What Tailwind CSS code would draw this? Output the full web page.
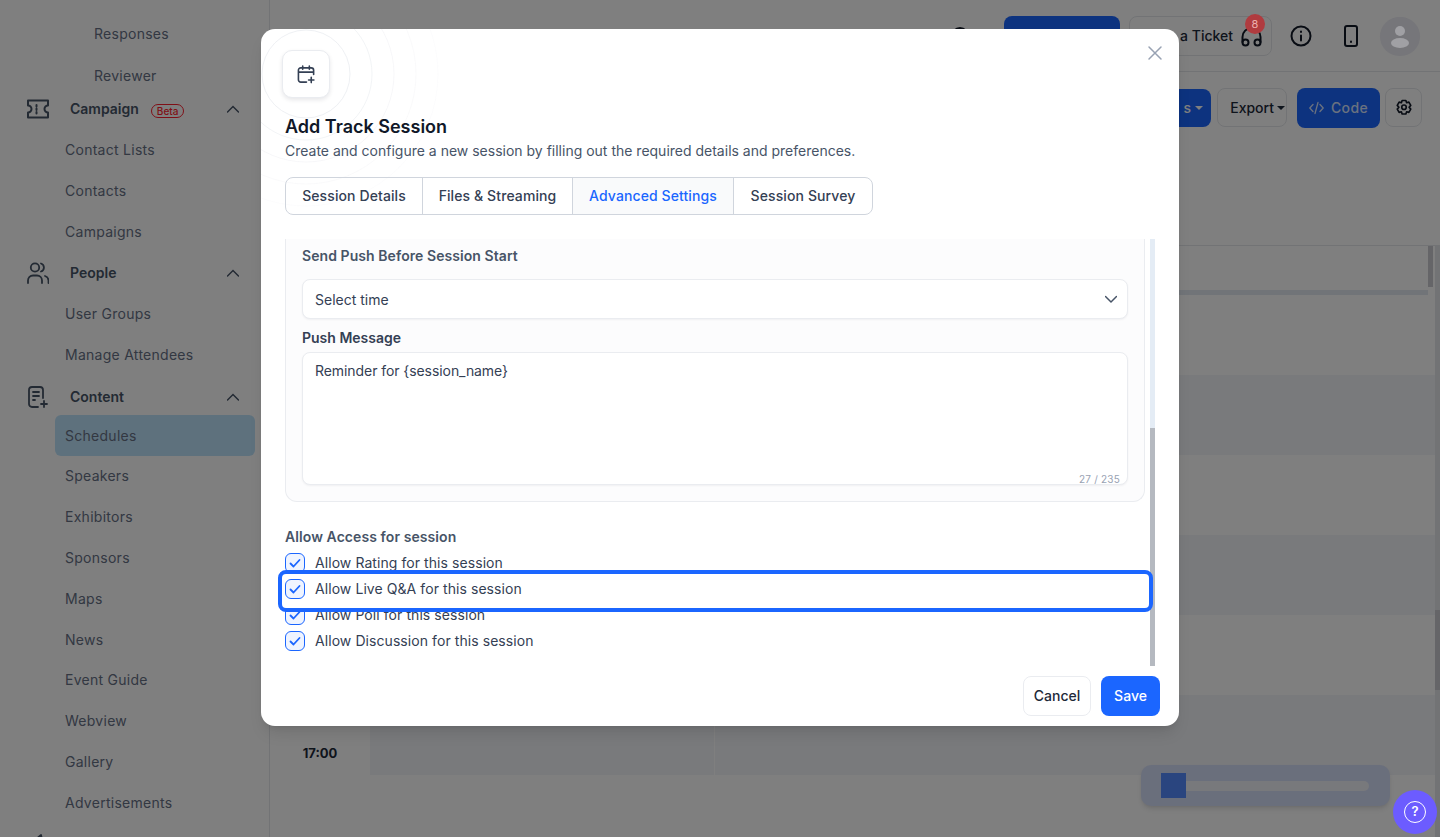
<!DOCTYPE html>
<html lang="en">
<head>
<meta charset="utf-8">
<title>Add Track Session</title>
<script src="https://cdn.jsdelivr.net/npm/@tailwindcss/browser@4"></script>
</head>
<body class="m-0 overflow-hidden bg-white font-['Inter',sans-serif]">
<div class="relative h-[837px] w-[1440px] overflow-hidden bg-white">
  <div class="flex h-full">
    <!-- Sidebar -->
    <aside class="flex h-full w-[270px] shrink-0 flex-col overflow-hidden border-r border-[#e5e7eb] pt-[13px] pr-[14px] text-sm tracking-[0.27px] text-[#667085]">
      <div class="flex h-[42px] shrink-0 items-center pl-[94px]">Responses</div>
      <div class="flex h-[41px] shrink-0 items-center pl-[94px]">Reviewer</div>
      <div class="mb-[7px] flex h-[26px] shrink-0 items-center pl-[27px] font-semibold tracking-normal text-[#475467]">
        <svg class="mr-[21px] h-[22px] w-[22px]" viewBox="0 0 22 22" fill="none" stroke="#475467" stroke-width="2" stroke-linejoin="round"><path d="M1 2.500h20v5a3.500 3.500 0 0 0 0 7v5H1v-5a3.500 3.500 0 0 0 0-7z"/><path d="M9.500 7v1.500M9.500 10.500v1.500M9.500 14v1.500" stroke-linecap="round"/></svg>
        <span>Campaign</span>
        <span class="ml-3 translate-y-[2px] rounded-full border border-[#ff1f2f] px-[5px] text-[10px] leading-[12px] font-medium text-[#ff1f2f]">Beta</span>
        <svg class="mr-4 ml-auto h-3 w-3" viewBox="0 0 12 12" fill="none" stroke="#475467" stroke-width="1.500" stroke-linecap="round"><path d="M0.500 9L6 3.500 11.500 9"/></svg>
      </div>
      <div class="flex h-[41px] shrink-0 items-center pl-[65px]">Contact Lists</div>
      <div class="flex h-[41px] shrink-0 items-center pl-[65px]">Contacts</div>
      <div class="flex h-[41px] shrink-0 items-center pl-[65px]">Campaigns</div>
      <div class="flex h-[42px] shrink-0 items-center pl-[27px] font-semibold tracking-normal text-[#475467]">
        <svg class="mr-[21px] h-[22px] w-[22px]" viewBox="0 0 22 22" fill="none" stroke="#475467" stroke-width="1.800" stroke-linecap="round"><circle cx="8" cy="5.500" r="4.200"/><path d="M14 1.500a4.200 4.200 0 0 1 0 8M1 21v-2.500a5 5 0 0 1 5-5h4a5 5 0 0 1 5 5V21M18 14a5 5 0 0 1 3.500 4.500V21"/></svg>
        <span>People</span>
        <svg class="mr-4 ml-auto h-3 w-3" viewBox="0 0 12 12" fill="none" stroke="#475467" stroke-width="1.500" stroke-linecap="round"><path d="M0.500 9L6 3.500 11.500 9"/></svg>
      </div>
      <div class="flex h-[40px] shrink-0 items-center pl-[65px]">User Groups</div>
      <div class="flex h-[42px] shrink-0 items-center pl-[65px]">Manage Attendees</div>
      <div class="flex h-[40px] shrink-0 items-center pt-[2px] pl-[27px] font-semibold tracking-normal text-[#475467]">
        <svg class="mr-[21px] h-[22px] w-[22px]" viewBox="0 0 22 22" fill="none" stroke="#475467" stroke-width="1.800" stroke-linecap="round" stroke-linejoin="round"><path d="M11 21H5a3 3 0 0 1-3-3V4a3 3 0 0 1 3-3h8a3 3 0 0 1 3 3v8"/><path d="M6 6h6M6 10h6M6 14h2M17 15v6M14 18h6"/></svg>
        <span>Content</span>
        <svg class="mr-4 ml-auto h-3 w-3" viewBox="0 0 12 12" fill="none" stroke="#475467" stroke-width="1.500" stroke-linecap="round"><path d="M0.500 9L6 3.500 11.500 9"/></svg>
      </div>
      <div class="-mt-px ml-[55px] flex h-[41px] shrink-0 items-center rounded-md bg-[#bde3fb] pl-[10px]">Schedules</div>
      <div class="flex h-[40px] shrink-0 items-center pl-[65px]">Speakers</div>
      <div class="flex h-[41px] shrink-0 items-center pl-[65px]">Exhibitors</div>
      <div class="flex h-[41px] shrink-0 items-center pl-[65px]">Sponsors</div>
      <div class="flex h-[41px] shrink-0 items-center pl-[65px]">Maps</div>
      <div class="flex h-[41px] shrink-0 items-center pl-[65px]">News</div>
      <div class="flex h-[40px] shrink-0 items-center pl-[65px]">Event Guide</div>
      <div class="flex h-[41px] shrink-0 items-center pl-[65px]">Webview</div>
      <div class="flex h-[41px] shrink-0 items-center pl-[65px]">Gallery</div>
      <div class="flex h-[41px] shrink-0 items-center pl-[65px]">Advertisements</div>
      <div class="flex h-[41px] shrink-0 items-center pl-[27px] font-semibold tracking-normal text-[#475467]">
        <svg class="mr-[21px] h-[22px] w-[22px]" viewBox="0 0 22 22" fill="none" stroke="#475467" stroke-width="1.800" stroke-linecap="round" stroke-linejoin="round"><path d="M14 2L3 11v4l15 3z"/></svg>
        <span>Engagement</span>
      </div>
    </aside>

    <!-- Main -->
    <main class="relative flex min-w-0 flex-1 flex-col">
      <header class="flex h-[72px] shrink-0 items-center justify-end border-b border-[#e5e7eb] pr-5">
        <svg class="mr-[34px] h-5 w-5" viewBox="0 0 20 20" fill="none" stroke="#111827" stroke-width="2"><circle cx="10" cy="10" r="8"/></svg>
        <div class="mr-[9px] h-10 w-[116px] rounded-lg bg-[#1b66ff]"></div>
        <div class="mr-[18px] flex h-10 w-[143px] items-center justify-end gap-2 rounded-lg border border-[#e5e7eb] pr-[9px] text-sm font-medium text-[#1d2939]">
          <span>Create a Ticket</span>
          <svg class="mt-[2px] h-[20px] w-[21px]" viewBox="0 0 21 20" fill="none" stroke="#111827" stroke-width="2" stroke-linecap="round"><path d="M1.500 15V10a9 9 0 0 1 18 0v5"/><circle cx="4.500" cy="15.500" r="3"/><circle cx="16.500" cy="15.500" r="3"/></svg>
        </div>
        <svg class="mr-[32px] h-[22px] w-[22px]" viewBox="0 0 22 22" fill="none" stroke="#111827" stroke-width="2" stroke-linecap="round"><circle cx="11" cy="11" r="9.500"/><path d="M11 10.500v5M11 6.500v.5"/></svg>
        <svg class="mr-[22px] h-[22px] w-[14px]" viewBox="0 0 14 22" fill="none" stroke="#111827" stroke-width="2" stroke-linecap="round"><rect x="1" y="1" width="12" height="20" rx="2"/><path d="M7 16.500v.5"/></svg>
        <div class="h-10 w-10"></div>
      </header>
      <div class="flex h-[173px] shrink-0 items-start justify-end pt-4 pr-[18px] text-sm font-medium">
        <div class="mt-px mr-[6px] flex h-[38px] w-[120px] items-center justify-end gap-1 rounded-lg bg-[#1b66ff] pr-[8px] text-white">s<span class="h-0 w-0 border-x-[4px] border-t-[4px] border-x-transparent border-t-white"></span></div>
        <div class="mr-[10px] flex h-[39px] w-[70px] items-center justify-end gap-[3px] rounded-lg border border-[#e5e7eb] pr-px text-[#1d2939]">Export<span class="h-0 w-0 border-x-[4px] border-t-[4px] border-x-transparent border-t-[#1d2939]"></span></div>
        <div class="mr-[5px] flex h-10 w-[83px] items-center justify-center gap-[7px] rounded-lg bg-[#1b66ff] text-sm tracking-wide text-[#d5e3ff]">
          <svg class="h-4 w-[15px]" viewBox="0 0 15 16" fill="none" stroke="currentColor" stroke-width="1.300" stroke-linecap="round" stroke-linejoin="round"><path d="M4 4.500L.8 8 4 11.500M11 4.500L14.200 8 11 11.500M9 2.500L6 13.500"/></svg>
          Code
        </div>
        <div class="flex h-[39px] w-[37px] items-center justify-center rounded-lg border border-[#e5e7eb]">
          <svg class="h-[18px] w-[18px]" viewBox="0 0 24 24" fill="none" stroke="#111827" stroke-width="2.200" stroke-linejoin="round"><path d="M9.500 2h5l1 3 3-.8 2.500 4.300-2.200 2.500 2.200 2.500-2.500 4.300-3-.8-1 3h-5l-1-3-3 .8L3 13.500l2.200-2.500L3 8.500l2.500-4.300 3 .8z"/><circle cx="12" cy="11" r="3"/></svg>
        </div>
      </div>
      <!-- Calendar -->
      <div class="flex flex-1 flex-col pr-[5px]">
        <div class="flex h-[50px] shrink-0 items-stretch border-t border-[#e5e7eb] pl-[100px]">
          <div class="flex flex-1 flex-col justify-end"><div class="h-[5px] bg-[#e2e8f0]"></div></div>
          <div class="w-[7px] pr-[2px]"><div class="h-[41px] bg-[#cbcbd0]"></div></div>
        </div>
        <div class="ml-[100px] h-[80px] shrink-0"></div>
        <div class="ml-[100px] h-[80px] shrink-0 bg-[#f2f4f9]"></div>
        <div class="ml-[100px] h-[80px] shrink-0"></div>
        <div class="ml-[100px] h-[80px] shrink-0 bg-[#f2f4f9]"></div>
        <div class="ml-[100px] h-[80px] shrink-0"></div>
        <div class="flex h-[80px] shrink-0">
          <div class="flex w-[100px] items-end justify-center pb-[12px] text-[13px] font-bold text-[#1d2939]">17:00</div>
          <div class="w-[345px] border-r border-[#fff] bg-[#f2f4f9]"></div>
          <div class="flex-1 bg-[#f2f4f9]"></div>
        </div>
      </div>
      <div class="absolute top-[245px] right-0 bottom-0 w-[5px] bg-[#e5e7eb]">
        <div class="mt-[365px] h-[80px] bg-[#cbcbd0]"></div>
      </div>
      <!-- Mini map -->
      <div class="absolute top-[765px] right-[50px] flex h-[41px] w-[249px] items-center rounded-[10px] bg-[#d5def8] pl-[20px] shadow-md">
        <div class="h-[25px] w-[25px] bg-[#548aff]"></div>
        <div class="h-[10px] w-[183px] rounded-r-full bg-[#f0f2f8]"></div>
      </div>
    </main>
  </div>

  <!-- Overlay -->
  <div class="absolute inset-0 bg-black/50"></div>

  <!-- Ticket badge -->
  <span class="absolute top-[14px] left-[1245px] flex h-5 w-5 items-center justify-center rounded-full bg-[#b03b3f] text-[11px] text-[#eeb0b0]">8</span>

  <!-- Avatar -->
  <div class="absolute top-[17px] left-[1380px] flex h-[39px] w-10 items-center justify-center rounded-full bg-[#76767a]">
    <svg class="h-7 w-7" viewBox="0 0 28 28" fill="#a0a0a4"><circle cx="14" cy="8" r="5"/><ellipse cx="14" cy="20" rx="9" ry="5"/></svg>
  </div>

  <!-- Help button -->
  <div class="absolute top-[790px] left-[1393px] flex h-11 w-11 items-center justify-center rounded-full bg-[#6c5cff]">
    <div class="flex h-[22px] w-[22px] items-center justify-center rounded-full border border-white text-[13px] font-semibold text-white">?</div>
  </div>

  <!-- Modal -->
  <section class="absolute top-[29px] left-[261px] flex h-[697px] w-[918px] flex-col overflow-hidden rounded-[14px] bg-white pl-6 shadow-lg">
    <svg class="pointer-events-none absolute -top-[29px] -left-[29px] h-[340px] w-[340px]" viewBox="0 0 340 340" fill="none" stroke="#eaecf0">
      <circle cx="74" cy="74" r="44" stroke-opacity="0.800"/>
      <circle cx="74" cy="74" r="66" stroke-opacity="0.600"/>
      <circle cx="74" cy="74" r="88" stroke-opacity="0.400"/>
      <circle cx="74" cy="74" r="110" stroke-opacity="0.250"/>
      <circle cx="74" cy="74" r="132" stroke-opacity="0.150"/>
    </svg>
    <button class="absolute top-[16px] right-[16px] h-4 w-4">
      <svg class="h-4 w-4" viewBox="0 0 16 16" fill="none" stroke="#98a2b3" stroke-width="1.500" stroke-linecap="round"><path d="M2 2l12 12M14 2L2 14"/></svg>
    </button>
    <div class="relative mt-[21px] -ml-[3px] flex h-12 w-12 items-center justify-center rounded-[10px] border border-[#eaecf0] bg-white shadow-[0_2px_4px_rgba(16,24,40,0.1)]">
      <svg class="h-[19px] w-[19px]" viewBox="0 0 20 20" fill="none" stroke="#344054" stroke-width="1.700" stroke-linecap="round" stroke-linejoin="round"><path d="M10 18H4a2.500 2.500 0 0 1-2.500-2.500V5.500A2.500 2.500 0 0 1 4 3h11a2.500 2.500 0 0 1 2.500 2.500V10M1.500 7.500h16M6 1v3.500M13 1v3.500M15 13v5.500M12.200 15.800h5.600"/></svg>
    </div>
    <h2 class="relative mt-[17px] text-lg leading-[24px] font-semibold text-[#101828]">Add Track Session</h2>
    <p class="relative text-sm leading-[24px] text-[#475467]">Create and configure a new session by filling out the required details and preferences.</p>
    <div class="relative mt-[14px] flex h-[38px] w-[588px] items-stretch overflow-hidden rounded-lg border border-[#d0d5dd] text-sm font-medium tracking-[0.1px] text-[#344054]">
      <div class="flex w-[137px] items-center justify-center border-r border-[#d0d5dd]">Session Details</div>
      <div class="flex w-[150px] items-center justify-center border-r border-[#d0d5dd]">Files &amp; Streaming</div>
      <div class="flex w-[161px] items-center justify-center border-r border-[#d0d5dd] bg-[#f9fafb] text-[#1b66ff]">Advanced Settings</div>
      <div class="flex flex-1 items-center justify-center">Session Survey</div>
    </div>
    <!-- Scroll area -->
    <div class="mt-6 flex h-[427px] w-[870px] gap-[5px]">
      <div class="w-[860px] shrink-0">
        <div class="h-[263px] rounded-b-xl border-x border-b border-[#eaecf0] bg-[#fcfcfd] px-4">
          <div class="flex h-[40px] items-start pt-[8px] text-sm leading-[18px] font-semibold tracking-[0.07px] text-[#475467]">Send Push Before Session Start</div>
          <div class="flex h-10 items-center justify-between rounded-lg border border-[#eaecf0] bg-white pr-[10px] pl-3 text-sm text-[#344054] shadow-[0_1px_2px_rgba(16,24,40,0.05)]">
            <span class="pt-px">Select time</span>
            <svg class="h-3 w-3" viewBox="0 0 12 12" fill="none" stroke="#475467" stroke-width="1.500" stroke-linecap="round" stroke-linejoin="round"><path d="M.5 3.500L6 9l5.500-5.500"/></svg>
          </div>
          <div class="mt-[10px] text-sm leading-[18px] font-semibold text-[#344054]">Push Message</div>
          <div class="relative mt-[5px] h-[133px] rounded-lg border border-[#eaecf0] bg-white px-3 pt-[8px] text-sm leading-[20px] tracking-[-0.07px] text-[#344054] shadow-[0_1px_2px_rgba(16,24,40,0.05)]">
            Reminder for {session_name}
            <span class="absolute right-[7px] -bottom-[1px] text-[10px] leading-[12px] tracking-[0.2px] text-[#98a2b3]">27 / 235</span>
          </div>
        </div>
        <div class="mt-[26px] text-sm leading-[18px] font-semibold tracking-[0.08px] text-[#475467]">Allow Access for session</div>
        <div class="mt-1 tracking-[0.07px]">
          <div class="flex h-[26px] items-center gap-[10px] text-sm text-[#344054]">
            <span class="flex h-5 w-5 items-center justify-center rounded-md border border-[#1b66ff] bg-[#eff4ff]"><svg class="h-3 w-3" viewBox="0 0 12 12" fill="none" stroke="#1b66ff" stroke-width="1.800" stroke-linecap="round" stroke-linejoin="round"><path d="M1.500 6.500L4.500 9.500 10.500 3"/></svg></span>
            <span>Allow Rating for this session</span>
          </div>
          <div class="relative flex h-[26px] items-center gap-[10px] text-sm text-[#344054]">
            <div class="absolute -top-[6px] -right-[8px] -bottom-[10px] -left-[7px] z-10 rounded-lg border-4 border-[#1b66ff] bg-white"></div>
            <span class="relative z-20 flex h-5 w-5 items-center justify-center rounded-md border border-[#1b66ff] bg-[#eff4ff]"><svg class="h-3 w-3" viewBox="0 0 12 12" fill="none" stroke="#1b66ff" stroke-width="1.800" stroke-linecap="round" stroke-linejoin="round"><path d="M1.500 6.500L4.500 9.500 10.500 3"/></svg></span>
            <span class="relative z-20">Allow Live Q&amp;A for this session</span>
          </div>
          <div class="flex h-[26px] items-center gap-[10px] text-sm text-[#344054]">
            <span class="flex h-5 w-5 items-center justify-center rounded-md border border-[#1b66ff] bg-[#eff4ff]"><svg class="h-3 w-3" viewBox="0 0 12 12" fill="none" stroke="#1b66ff" stroke-width="1.800" stroke-linecap="round" stroke-linejoin="round"><path d="M1.500 6.500L4.500 9.500 10.500 3"/></svg></span>
            <span>Allow Poll for this session</span>
          </div>
          <div class="flex h-[26px] items-center gap-[10px] text-sm text-[#344054]">
            <span class="flex h-5 w-5 items-center justify-center rounded-md border border-[#1b66ff] bg-[#eff4ff]"><svg class="h-3 w-3" viewBox="0 0 12 12" fill="none" stroke="#1b66ff" stroke-width="1.800" stroke-linecap="round" stroke-linejoin="round"><path d="M1.500 6.500L4.500 9.500 10.500 3"/></svg></span>
            <span>Allow Discussion for this session</span>
          </div>
        </div>
      </div>
      <div class="flex w-[5px] shrink-0 flex-col bg-[#e4ecf5]">
        <div class="mt-[189px] flex-1 bg-[#b5b9c0]"></div>
      </div>
    </div>
    <div class="mt-[10px] flex w-[875px] justify-end gap-[10px] text-sm font-medium">
      <div class="flex h-10 w-[68px] items-center justify-center rounded-lg border border-[#eaecf0] bg-white text-[#1d2939]">Cancel</div>
      <div class="flex h-10 w-[59px] items-center justify-center rounded-lg bg-[#1b66ff] text-white">Save</div>
    </div>
  </section>
</div>
</body>
</html>
